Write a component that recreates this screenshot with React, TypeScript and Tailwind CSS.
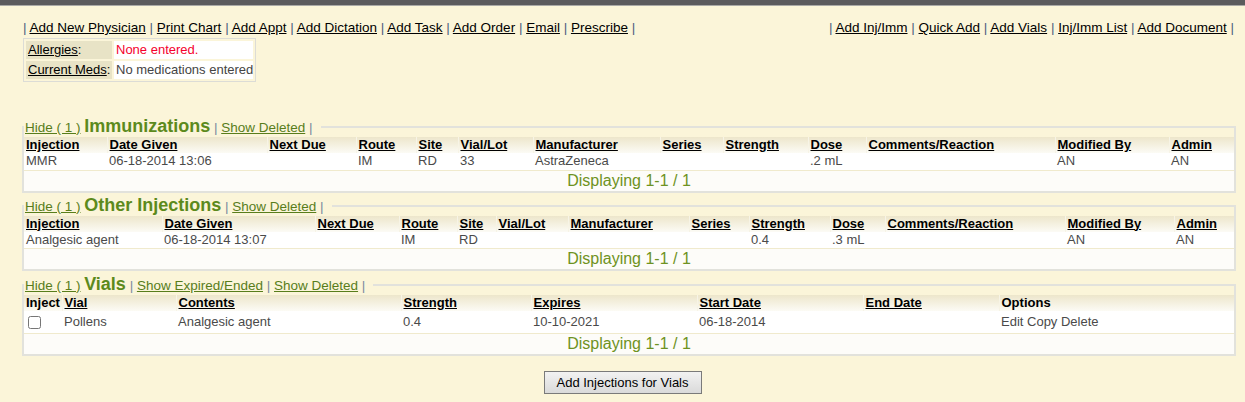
import React from 'react';

type Col = { label: string; w: number; link?: boolean };

const immCols: Col[] = [
  { label: 'Injection', w: 83, link: true },
  { label: 'Date Given', w: 160, link: true },
  { label: 'Next Due', w: 89, link: true },
  { label: 'Route', w: 60, link: true },
  { label: 'Site', w: 42, link: true },
  { label: 'Vial/Lot', w: 75, link: true },
  { label: 'Manufacturer', w: 127, link: true },
  { label: 'Series', w: 63, link: true },
  { label: 'Strength', w: 85, link: true },
  { label: 'Dose', w: 58, link: true },
  { label: 'Comments/Reaction', w: 189, link: true },
  { label: 'Modified By', w: 114, link: true },
  { label: 'Admin', w: 65, link: true },
];

const otherCols: Col[] = [
  { label: 'Injection', w: 138, link: true },
  { label: 'Date Given', w: 153, link: true },
  { label: 'Next Due', w: 84, link: true },
  { label: 'Route', w: 58, link: true },
  { label: 'Site', w: 39, link: true },
  { label: 'Vial/Lot', w: 72, link: true },
  { label: 'Manufacturer', w: 121, link: true },
  { label: 'Series', w: 60, link: true },
  { label: 'Strength', w: 81, link: true },
  { label: 'Dose', w: 55, link: true },
  { label: 'Comments/Reaction', w: 180, link: true },
  { label: 'Modified By', w: 109, link: true },
  { label: 'Admin', w: 60, link: true },
];

const vialCols: Col[] = [
  { label: 'Inject', w: 38 },
  { label: 'Vial', w: 114, link: true },
  { label: 'Contents', w: 225, link: true },
  { label: 'Strength', w: 130, link: true },
  { label: 'Expires', w: 166, link: true },
  { label: 'Start Date', w: 166, link: true },
  { label: 'End Date', w: 136, link: true },
  { label: 'Options', w: 235 },
];

const immRow = ['MMR', '06-18-2014 13:06', '', 'IM', 'RD', '33', 'AstraZeneca', '', '', '.2 mL', '', 'AN', 'AN'];
const otherRow = ['Analgesic agent', '06-18-2014 13:07', '', 'IM', 'RD', '', '', '', '0.4', '.3 mL', '', 'AN', 'AN'];

function Sep() {
  return <span className="text-[#4d5f80]"> | </span>;
}

function Legend({ title, links }: { title: string; links: string[] }) {
  return (
    <legend className="pr-2 pl-px leading-[18px] whitespace-nowrap">
      <a href="#" className="text-[13.5px] text-[#587d1b] underline">Hide ( 1 )</a>{' '}
      <span className="text-[18px] font-bold text-[#5c8a1c]">{title}</span>
      {links.map((l) => (
        <span key={l} className="text-[13.5px]">
          <span className="text-[#7a8aa0]"> | </span>
          <a href="#" className="text-[#587d1b] underline">{l}</a>
        </span>
      ))}
      <span className="text-[13.5px] text-[#7a8aa0]"> |</span>
    </legend>
  );
}

function GridTable({ cols, children }: { cols: Col[]; children: React.ReactNode }) {
  return (
    <table className="w-full table-fixed border-collapse text-[13px]">
      <colgroup>
        {cols.map((c) => (
          <col key={c.label} style={{ width: c.w }} />
        ))}
      </colgroup>
      <thead>
        <tr className="h-[16px] bg-gradient-to-b from-[#ede6cb] to-[#fcfbf5]">
          {cols.map((c, i) => (
            <th
              key={c.label}
              className={`p-0 pl-[2px] text-left font-bold text-black leading-[16px] whitespace-nowrap ${i > 0 ? 'border-l border-[#f7f4e6]' : ''}`}
            >
              {c.link ? <a href="#" className="underline">{c.label}</a> : c.label}
            </th>
          ))}
        </tr>
      </thead>
      <tbody>
        {children}
        <tr className="h-[20px] bg-[#fdfcf9]">
          <td colSpan={cols.length} className="p-0 text-center text-[16px] text-[#6e9222] leading-[20px]">
            Displaying 1-1 / 1
          </td>
        </tr>
      </tbody>
    </table>
  );
}

function DataRow({ cells }: { cells: string[] }) {
  return (
    <tr className="h-[17px] bg-white border-b border-[#f0eacd]">
      {cells.map((c, i) => (
        <td key={i} className="p-0 pl-[2px] text-[#4a4a4a] leading-[16px] whitespace-nowrap">
          {c}
        </td>
      ))}
    </tr>
  );
}

export default function App() {
  return (
    <div className="h-[402px] overflow-hidden bg-[#fbf5d9] text-[13px] text-black" style={{ fontFamily: '"Liberation Sans", Arial, sans-serif' }}>
      <div className="h-[5px] bg-[#5b5b5d]" />
      <div className="h-px bg-[#a9a9a6]" />

      <div className="flex justify-between pl-[23px] pr-[11px] pt-[14px] text-[13.5px] leading-[16px]">
        <div>
          <span className="text-[#4d5f80]">| </span>
          {['Add New Physician', 'Print Chart', 'Add Appt', 'Add Dictation', 'Add Task', 'Add Order', 'Email', 'Prescribe'].map((l, i) => (
            <span key={l}>
              {i > 0 && <Sep />}
              <a href="#" className="underline">{l}</a>
            </span>
          ))}
          <span className="text-[#4d5f80]"> |</span>
        </div>
        <div>
          <span className="text-[#4d5f80]">| </span>
          {['Add Inj/Imm', 'Quick Add', 'Add Vials', 'Inj/Imm List', 'Add Document'].map((l, i) => (
            <span key={l}>
              {i > 0 && <Sep />}
              <a href="#" className="underline">{l}</a>
            </span>
          ))}
          <span className="text-[#4d5f80]"> |</span>
        </div>
      </div>

      <table className="ml-[23px] mt-[2px] border border-[#dcdcd6] border-separate border-spacing-[2px] bg-[#fbf5d9]">
        <tbody>
          <tr>
            <td className="h-[18px] w-[86px] p-0 pl-[2px] bg-[#e8e3c6] leading-[18px]">
              <a href="#" className="underline">Allergies</a>:
            </td>
            <td className="h-[18px] p-0 pl-[2px] bg-white text-[#f5002d] leading-[18px]">None entered.</td>
          </tr>
          <tr>
            <td className="h-[18px] p-0 pl-[2px] bg-[#e8e3c6] leading-[18px] whitespace-nowrap">
              <a href="#" className="underline">Current Meds</a>:
            </td>
            <td className="h-[18px] p-0 pl-[2px] bg-white text-[#444] leading-[18px] whitespace-nowrap">No medications entered</td>
          </tr>
        </tbody>
      </table>

      <div className="mx-[22px] mt-[35px] flex flex-col">
        <fieldset className="border-2 border-[#e2e2dc]">
          <Legend title="Immunizations" links={['Show Deleted']} />
          <GridTable cols={immCols}>
            <DataRow cells={immRow} />
          </GridTable>
        </fieldset>

        <fieldset className="mt-[3px] border-2 border-[#e2e2dc]">
          <Legend title="Other Injections" links={['Show Deleted']} />
          <GridTable cols={otherCols}>
            <DataRow cells={otherRow} />
          </GridTable>
        </fieldset>

        <fieldset className="mt-[4px] border-2 border-[#e2e2dc]">
          <Legend title="Vials" links={['Show Expired/Ended', 'Show Deleted']} />
          <GridTable cols={vialCols}>
            <tr className="h-[22px] bg-white border-b border-[#f0eacd]">
              <td className="p-0 pl-[4px]">
                <input type="checkbox" className="w-[13px] h-[13px] align-middle" />
              </td>
              <td className="p-0 pl-[2px] text-[#4a4a4a]">Pollens</td>
              <td className="p-0 pl-[2px] text-[#4a4a4a]">Analgesic agent</td>
              <td className="p-0 pl-[2px] text-[#4a4a4a]">0.4</td>
              <td className="p-0 pl-[2px] text-[#4a4a4a]">10-10-2021</td>
              <td className="p-0 pl-[2px] text-[#4a4a4a]">06-18-2014</td>
              <td className="p-0" />
              <td className="p-0 pl-[2px] text-[#4a4a4a]">Edit Copy Delete</td>
            </tr>
          </GridTable>
        </fieldset>

        <div className="flex justify-center mt-[15px]">
          <button className="h-[23px] w-[158px] border border-[#7a7a7a] bg-gradient-to-b from-[#f2f2f2] to-[#dadada] text-[13px] leading-[21px] text-black">
            Add Injections for Vials
          </button>
        </div>
      </div>
    </div>
  );
}
